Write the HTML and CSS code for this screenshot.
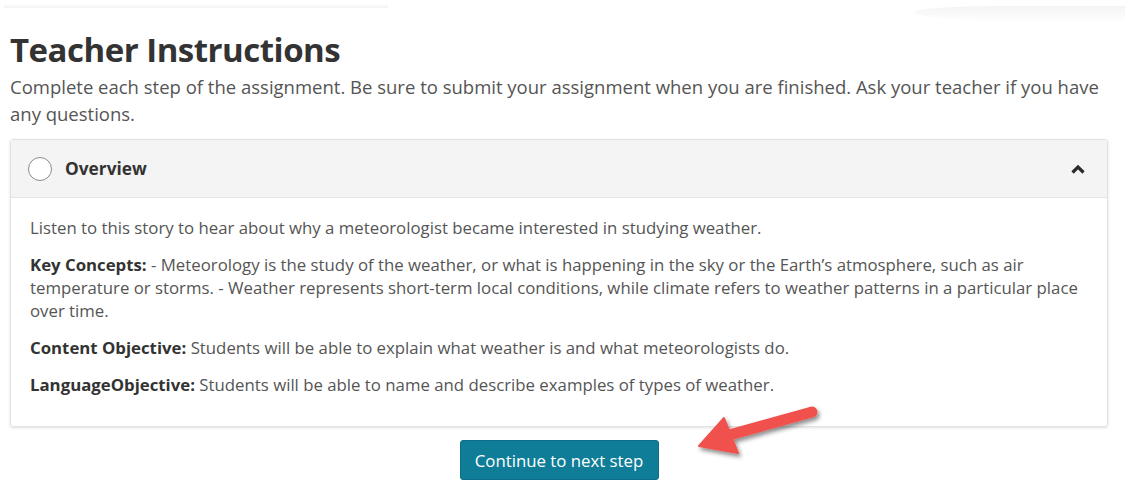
FILE: index.html
```html
<!DOCTYPE html>
<html>
<head>
<meta charset="utf-8">
<link rel="stylesheet" href="styles.css">
</head>
<body>
<div class="top">
  <div class="top-line"></div>
  <div class="top-shade"></div>
</div>
<main class="page">
  <h1 class="title">Teacher Instructions</h1>
  <p class="intro">Complete each step of the assignment. Be sure to submit your assignment when you are finished. Ask your teacher if you have any questions.</p>
  <section class="card">
    <header class="card-head">
      <span class="circle"></span>
      <span class="card-title">Overview</span>
      <svg class="chev" width="14" height="10" viewBox="0 0 14 10"><path d="M1.5 8.5 L7 3 L12.5 8.5" fill="none" stroke="#2b2b2b" stroke-width="3.2"/></svg>
    </header>
    <div class="card-body">
      <p>Listen to this story to hear about why a meteorologist became interested in studying weather.</p>
      <p><b>Key Concepts:</b> - Meteorology is the study of the weather, or what is happening in the sky or the Earth’s atmosphere, such as air temperature or storms. - Weather represents short-term local conditions, while climate refers to weather patterns in a particular place over time.</p>
      <p><b>Content Objective:</b> Students will be able to explain what weather is and what meteorologists do.</p>
      <p><b>LanguageObjective:</b> Students will be able to name and describe examples of types of weather.</p>
    </div>
  </section>
  <div class="actions">
    <button class="btn">Continue to next step</button>
    <svg class="arrow" width="140" height="70" viewBox="0 0 140 70">
      <defs>
        <filter id="sh" x="-20%" y="-40%" width="150%" height="180%">
          <feDropShadow dx="2" dy="3" stdDeviation="2" flood-color="#000" flood-opacity="0.45"/>
        </filter>
      </defs>
      <g filter="url(#sh)">
        <path d="M130 12 L40 37" stroke="#f0514d" stroke-width="11" stroke-linecap="round" fill="none"/>
        <path d="M17 46 L42 18 L56 53 Z" fill="#f0514d" stroke="#f0514d" stroke-width="2" stroke-linejoin="round"/>
      </g>
    </svg>
  </div>
</main>
</body>
</html>
```
FILE: styles.css
```css
html, body {
  margin: 0;
  padding: 0;
  background: #fff;
}
body {
  font-family: "Open Sans", "Liberation Sans", sans-serif;
  color: #555;
  width: 1132px;
  height: 500px;
  overflow: hidden;
}
.top {
  display: flex;
  justify-content: space-between;
  height: 26px;
}
.top-line {
  width: 384px;
  height: 3px;
  margin: 5px 0 0 4px;
  background: linear-gradient(#fafafa, #f3f3f3);
}
.top-shade {
  width: 210px;
  height: 16px;
  margin: 6px 7px 0 0;
  background: linear-gradient(to bottom, #f4f4f4, #fff);
  border-radius: 40% 0 0 60%;
}
.page {
  padding: 0 24px 0 10px;
}
.title {
  font-family: "Open Sans", "Liberation Sans", sans-serif;
  font-weight: 700;
  font-size: 33px;
  color: #333;
  margin: 4px 0 0 0;
  line-height: 40px;
  letter-spacing: -0.5px;
}
.intro {
  font-size: 18.5px;
  line-height: 27px;
  margin: 3px 0 12px 0;
  color: #555;
}
.card {
  border: 1px solid #e2e2e2;
  border-radius: 3px;
  box-shadow: 0 1px 3px rgba(0,0,0,0.12);
}
.card-head {
  display: flex;
  align-items: center;
  height: 57px;
  padding: 0 22px 0 17px;
  background: #f4f4f4;
  border-bottom: 1px solid #e6e6e6;
}
.circle {
  width: 22px;
  height: 22px;
  border: 1.5px solid #8a8a8a;
  border-radius: 50%;
  background: #fff;
}
.card-title {
  font-weight: 700;
  font-size: 17.3px;
  color: #333;
  margin-left: 13px;
  flex: 1;
}
.chev {
  display: block;
}
.card-body {
  padding: 18px 20px 30px 19px;
  font-size: 16.8px;
  line-height: 23px;
  color: #555;
}
.card-body p {
  margin: 0 0 14px 0;
}
.card-body p:last-child {
  margin-bottom: 0;
}
.card-body b {
  color: #333;
  font-weight: 700;
}
.actions {
  position: relative;
  display: flex;
  justify-content: center;
  padding-top: 13px;
}
.btn {
  font-family: "Open Sans", "Liberation Sans", sans-serif;
  font-size: 16.8px;
  color: #fff;
  background: #0f7d97;
  border: 1px solid #0b6f87;
  border-radius: 3px;
  width: 199px;
  height: 40px;
  padding: 0;
}
.arrow {
  position: absolute;
  left: 672px;
  top: -27px;
}
```
